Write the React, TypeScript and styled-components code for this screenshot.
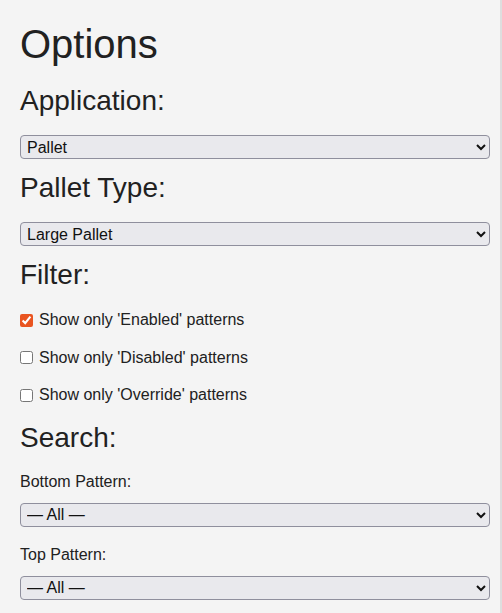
import styled, { createGlobalStyle } from "styled-components";

const GlobalStyle = createGlobalStyle`
  html, body {
    margin: 0;
    padding: 0;
    background: #f4f4f4;
  }
  body {
    font-family: "Liberation Sans", Arial, sans-serif;
    color: #212121;
  }
`;

const Panel = styled.div`
  box-sizing: border-box;
  width: 502px;
  min-height: 100vh;
  padding: 21px 10px 0 20px;
  border-right: 2px solid #dedede;
  display: flow-root;
`;

const Title = styled.h1`
  font-size: 40px;
  line-height: 46px;
  font-weight: 400;
  margin: 0 0 18px;
`;

const Heading = styled.h2`
  font-size: 28px;
  line-height: 32px;
  font-weight: 400;
  margin: 13px 0 18px;
`;

const FieldLabel = styled.label`
  display: block;
  font-size: 16px;
  line-height: 18px;
  margin: 19px 0 12px;
`;

const Select = styled.select`
  display: block;
  box-sizing: border-box;
  width: 100%;
  height: 24px;
  margin: 0;
  padding: 0 2px;
  font-family: "Liberation Sans", Arial, sans-serif;
  font-size: 16px;
  color: #111;
  background-color: #e9e9ed;
  border: 1px solid #8f8f9d;
  border-radius: 4px;
`;

const CheckRow = styled.label`
  display: flex;
  align-items: center;
  gap: 6px;
  min-height: 22px;
  margin: 18px 0 15.5px;
  font-size: 16px;
  & + & {
    margin-top: 15.5px;
  }
`;

const Check = styled.input`
  width: 13px;
  height: 13px;
  margin: 0;
  accent-color: #e95420;
`;

const filters = [
  { label: "Show only 'Enabled' patterns", checked: true },
  { label: "Show only 'Disabled' patterns", checked: false },
  { label: "Show only 'Override' patterns", checked: false },
];

export default function App() {
  return (
    <>
      <GlobalStyle />
      <Panel>
        <Title>Options</Title>

        <Heading>Application:</Heading>
        <Select defaultValue="pallet">
          <option value="pallet">Pallet</option>
        </Select>

        <Heading>Pallet Type:</Heading>
        <Select defaultValue="large">
          <option value="large">Large Pallet</option>
        </Select>

        <Heading>Filter:</Heading>
        {filters.map((f) => (
          <CheckRow key={f.label}>
            <Check type="checkbox" defaultChecked={f.checked} />
            {f.label}
          </CheckRow>
        ))}

        <Heading>Search:</Heading>
        <FieldLabel htmlFor="bottom">Bottom Pattern:</FieldLabel>
        <Select id="bottom" defaultValue="all">
          <option value="all">— All —</option>
        </Select>
        <FieldLabel htmlFor="top">Top Pattern:</FieldLabel>
        <Select id="top" defaultValue="all">
          <option value="all">— All —</option>
        </Select>
      </Panel>
    </>
  );
}
